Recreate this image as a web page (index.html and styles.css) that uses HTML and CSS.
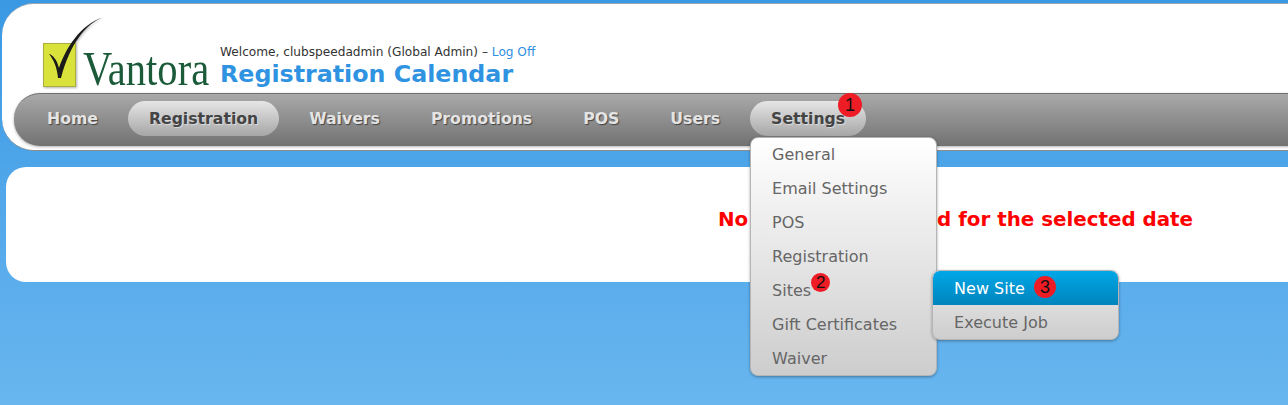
FILE: index.html
```html
<!DOCTYPE html>
<html lang="en">
<head>
  <meta charset="UTF-8" />
  <title>Registration Calendar</title>
  <link rel="stylesheet" href="styles.css">
</head>
<body>

  <!-- Header with logo, welcome line and main nav -->
  <div class="header">
    <div class="brand">
      <div class="logo">
        <svg class="logo-mark" width="70" height="76" viewBox="0 0 70 76">
          <rect x="3.5" y="29.5" width="32" height="43" fill="#d9e23a" stroke="#a9ae3c" />
          <path d="M9 40 C13 41 17 46 19 54 C25 36 40 10 64 3 C46 9 30 30 21 64 L18 64 C17 54 14 46 9 40 Z" fill="#1a1a1a" />
        </svg>
        <span class="logo-text">Vantora</span>
      </div>
      <div class="titles">
        <div class="welcome">Welcome, clubspeedadmin (Global Admin) &ndash; <a href="#">Log Off</a></div>
        <h1>Registration Calendar</h1>
      </div>
    </div>

    <ul class="nav">
      <li><a href="#">Home</a></li>
      <li class="active"><a href="#">Registration</a></li>
      <li><a href="#">Waivers</a></li>
      <li><a href="#">Promotions</a></li>
      <li><a href="#">POS</a></li>
      <li><a href="#">Users</a></li>
      <li class="active settings">
        <a href="#">Settings</a>
        <span class="badge badge-1">1</span>

        <!-- Settings dropdown -->
        <ul class="dropdown">
          <li><a href="#">General</a></li>
          <li><a href="#">Email Settings</a></li>
          <li><a href="#">POS</a></li>
          <li><a href="#">Registration</a></li>
          <li class="sites">
            <a href="#">Sites</a>
            <span class="badge badge-2">2</span>
            <ul class="submenu">
              <li class="current"><a href="#">New Site</a><span class="badge badge-3">3</span></li>
              <li><a href="#">Execute Job</a></li>
            </ul>
          </li>
          <li><a href="#">Gift Certificates</a></li>
          <li><a href="#">Waiver</a></li>
        </ul>
      </li>
    </ul>
  </div>

  <!-- Calendar panel -->
  <div class="content">
    <p class="no-events">No events scheduled for the selected date</p>
  </div>

</body>
</html>
```

FILE: styles.css
```css
/* Basic Reset */
* {
  margin: 0;
  padding: 0;
  box-sizing: border-box;
}

html, body {
  height: 405px;
  overflow: hidden;
}

body {
  font-family: "DejaVu Sans", Verdana, sans-serif;
  background: linear-gradient(#3a99e4, #69b6ef);
  padding-top: 3px;
}

ul {
  list-style-type: none;
}

a {
  text-decoration: none;
}

/* Header */
.header {
  height: 148px;
  margin: 0 -60px 16px 2px;
  padding: 0 0 4px 12px;
  background: #fff;
  border-bottom: 1px solid #8c8c8c;
  border-top: 1px solid #9aa6b0;
  border-radius: 32px;
  display: flex;
  flex-direction: column;
  justify-content: flex-end;
}

.brand {
  display: flex;
  align-items: flex-end;
  height: 88px;
  padding-left: 26px;
  padding-bottom: 3px;
}

/* Logo */
.logo {
  display: flex;
  align-items: flex-end;
  position: relative;
  width: 180px;
  height: 76px;
}

.logo-mark {
  flex: none;
  filter: drop-shadow(1px 1px 1px rgba(0, 0, 0, 0.3));
}

.logo-text {
  position: absolute;
  left: 43px;
  bottom: -6px;
  font-family: "Liberation Serif", serif;
  font-size: 48px;
  color: #1c5b3a;
  white-space: nowrap;
  transform: scaleX(0.845);
  transform-origin: left bottom;
}

.titles {
  padding-bottom: 1px;
}

.welcome {
  font-size: 12.15px;
  color: #333;
  line-height: 15px;
}

.welcome a {
  color: #2f8fe0;
}

h1 {
  font-size: 23.75px;
  line-height: 29px;
  font-weight: bold;
  color: #2f93e2;
}

/* Main nav */
.nav {
  display: flex;
  align-items: center;
  height: 53px;
  padding: 0 0 2px 12px;
  gap: 9px;
  background: linear-gradient(#a9a9a9, #737373);
  border-top: 1px solid #6f6f6f;
  border-bottom: 1px solid #6f6f6f;
  border-radius: 26px 0 0 26px;
  box-shadow: 0 1px 3px rgba(0, 0, 0, 0.3);
}

.nav > li {
  position: relative;
  height: 35px;
  padding: 0 21px;
  border-radius: 18px;
  display: flex;
  align-items: center;
}

.nav > li > a {
  font-size: 15.7px;
  font-weight: bold;
  color: #e4e4e4;
  text-shadow: 1px 1px 1px rgba(0, 0, 0, 0.5);
}

.nav > li.active {
  background: linear-gradient(#e6e6e6, #a6a6a6);
}

.nav > li.active > a {
  color: #444;
  text-shadow: 1px 1px 1px rgba(255, 255, 255, 0.5);
}

/* Dropdown */
.dropdown {
  position: absolute;
  top: 36px;
  left: 0;
  width: 187px;
  height: 239px;
  background: linear-gradient(#fff, #cdcdcd);
  border: 1px solid #b5b5b5;
  border-radius: 8px;
  box-shadow: 0 1px 3px rgba(0, 0, 0, 0.35);
}

.dropdown li {
  position: relative;
  height: 34px;
  padding-left: 21px;
  font-size: 16px;
  line-height: 33px;
  white-space: nowrap;
}

.dropdown a {
  color: #666;
}

/* Sub menu */
.submenu {
  position: absolute;
  top: -4px;
  left: 181px;
  width: 187px;
  height: 70px;
  background: linear-gradient(#ececec, #cdcdcd);
  border: 1px solid #b5b5b5;
  border-radius: 8px;
  box-shadow: 0 1px 3px rgba(0, 0, 0, 0.35);
}

.dropdown .submenu li {
  line-height: 35px;
}

.submenu li.current {
  background: linear-gradient(#00a7e6, #0084bd);
  border-radius: 7px 7px 0 0;
}

.submenu li.current a {
  color: #fff;
}

/* Red step badges */
.badge {
  position: absolute;
  font-family: "Liberation Sans", Arial, sans-serif;
  font-size: 18px;
  line-height: 24px;
  text-align: center;
  color: #111;
  background: #ee1c25;
  border-radius: 50%;
}

.badge-1 {
  top: -8px;
  left: 88px;
  width: 24px;
  height: 24px;
}

.badge-2 {
  top: -1px;
  left: 60px;
  width: 19px;
  height: 19px;
  line-height: 19px;
  font-size: 17px;
}

.badge-3 {
  top: 5px;
  left: 101px;
  width: 22px;
  height: 22px;
  line-height: 22px;
}

/* Calendar panel */
.content {
  height: 115px;
  margin: 0 -60px 0 6px;
  padding: 41px 0 0 712px;
  background: #fff;
  border-radius: 20px;
}

.no-events {
  font-size: 19.85px;
  font-weight: bold;
  color: #f00;
  white-space: nowrap;
}
```
